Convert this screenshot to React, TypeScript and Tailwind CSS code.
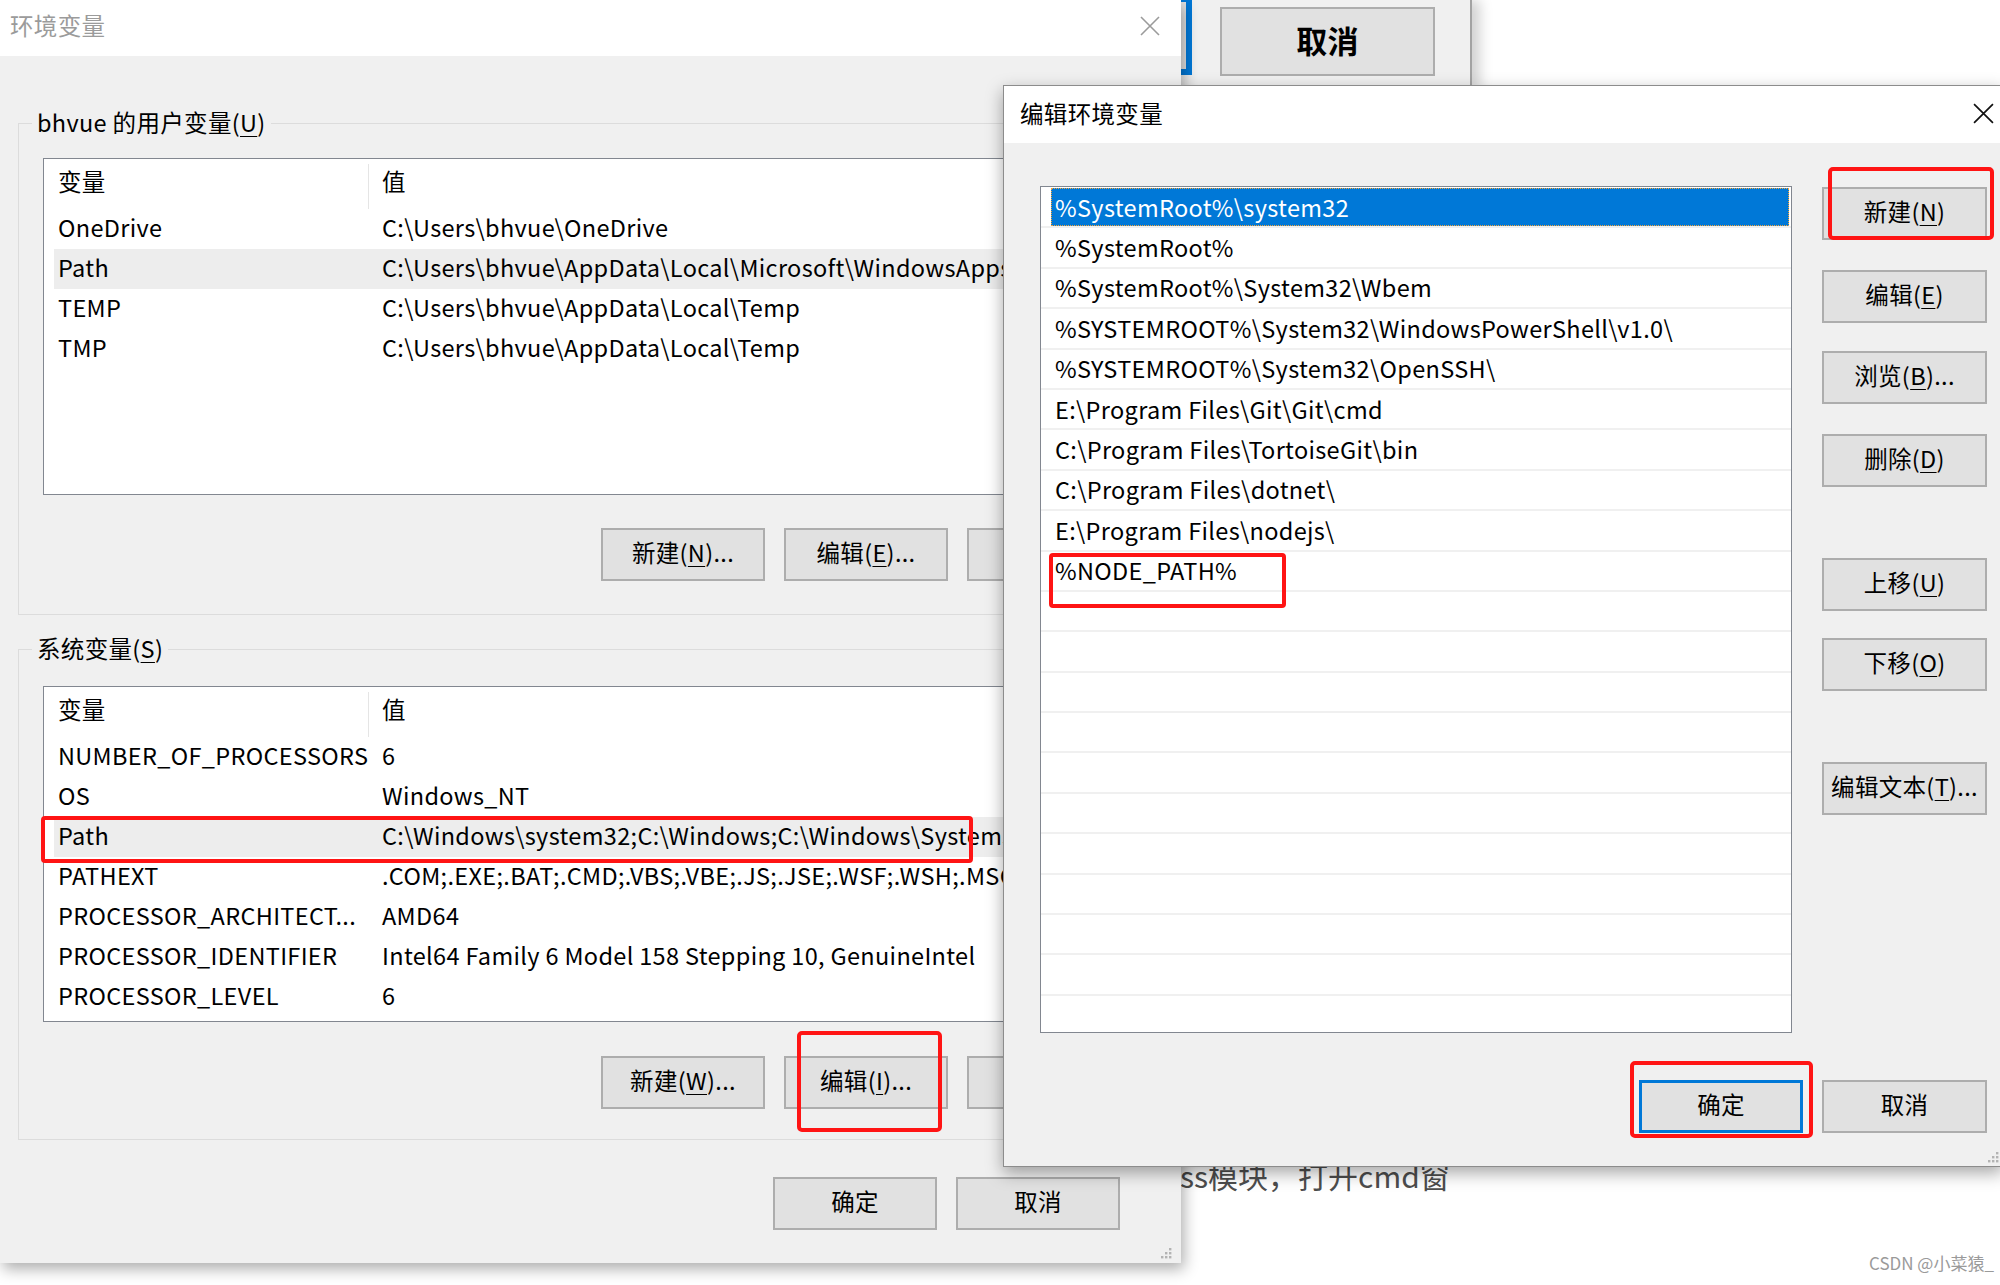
import React from "react";

type Pair = [string, string];

const userVars: Pair[] = [
  ["OneDrive", "C:\\Users\\bhvue\\OneDrive"],
  ["Path", "C:\\Users\\bhvue\\AppData\\Local\\Microsoft\\WindowsApps;"],
  ["TEMP", "C:\\Users\\bhvue\\AppData\\Local\\Temp"],
  ["TMP", "C:\\Users\\bhvue\\AppData\\Local\\Temp"],
];

const sysVars: Pair[] = [
  ["NUMBER_OF_PROCESSORS", "6"],
  ["OS", "Windows_NT"],
  ["Path", "C:\\Windows\\system32;C:\\Windows;C:\\Windows\\System32\\Wbem;"],
  ["PATHEXT", ".COM;.EXE;.BAT;.CMD;.VBS;.VBE;.JS;.JSE;.WSF;.WSH;.MSC"],
  ["PROCESSOR_ARCHITECT...", "AMD64"],
  ["PROCESSOR_IDENTIFIER", "Intel64 Family 6 Model 158 Stepping 10, GenuineIntel"],
  ["PROCESSOR_LEVEL", "6"],
];

const pathItems = [
  "%SystemRoot%\\system32",
  "%SystemRoot%",
  "%SystemRoot%\\System32\\Wbem",
  "%SYSTEMROOT%\\System32\\WindowsPowerShell\\v1.0\\",
  "%SYSTEMROOT%\\System32\\OpenSSH\\",
  "E:\\Program Files\\Git\\Git\\cmd",
  "C:\\Program Files\\TortoiseGit\\bin",
  "C:\\Program Files\\dotnet\\",
  "E:\\Program Files\\nodejs\\",
  "%NODE_PATH%",
];

function Btn({ children, w = "w-[164px]", focus = false }: { children: React.ReactNode; w?: string; focus?: boolean }) {
  return (
    <div
      className={`flex h-[53px] shrink-0 items-center justify-center bg-[#e1e1e1] pb-[3px] text-black ${w} ${
        focus ? "border-[3px] border-[#0078d7]" : "border-2 border-[#adadad]"
      }`}
    >
      {children}
    </div>
  );
}

function U({ children }: { children: React.ReactNode }) {
  return <span className="underline decoration-1 underline-offset-[4px]">{children}</span>;
}

function CloseX({ color, size }: { color: string; size: number }) {
  return (
    <svg width={size} height={size} viewBox="0 0 20 20" className="shrink-0">
      <path d="M1 1 L19 19 M19 1 L1 19" stroke={color} strokeWidth="1.6" fill="none" />
    </svg>
  );
}

function Grip() {
  return (
    <svg width="11" height="11" viewBox="0 0 11 11">
      <rect x="8" y="0" width="2.4" height="2.4" fill="#b3b3b3" />
      <rect x="8" y="4" width="2.4" height="2.4" fill="#b3b3b3" />
      <rect x="4" y="4" width="2.4" height="2.4" fill="#b3b3b3" />
      <rect x="8" y="8" width="2.4" height="2.4" fill="#b3b3b3" />
      <rect x="4" y="8" width="2.4" height="2.4" fill="#b3b3b3" />
      <rect x="0" y="8" width="2.4" height="2.4" fill="#b3b3b3" />
    </svg>
  );
}

function VarList({ rows, height, selected }: { rows: Pair[]; height: string; selected: number }) {
  return (
    <div className={`flex flex-col overflow-hidden border border-[#828790] bg-white ${height}`}>
      <div className="flex h-[50px] shrink-0 items-center">
        <div className="w-[324px] pb-[5px] pl-[14px]">变量</div>
        <div className="h-[45px] w-px self-end bg-[#e5e5e5]" />
        <div className="pb-[5px] pl-[13px]">值</div>
      </div>
      {rows.map((r, i) => (
        <div
          key={i}
          className={`ml-[10px] flex h-[40px] shrink-0 items-center whitespace-nowrap pb-[3px] ${i === selected ? "bg-[#ededed]" : ""}`}
        >
          <div className="w-[314px] shrink-0 pl-[4px]">{r[0]}</div>
          <div className="pl-[14px]">{r[1]}</div>
        </div>
      ))}
    </div>
  );
}

function GroupLabel({ children }: { children: React.ReactNode }) {
  return (
    <div className="-ml-[11px] -mt-[16px] h-[30px] w-fit bg-[#f0f0f0] px-[5px] pb-[2px] leading-[28px]">{children}</div>
  );
}

export default function App() {
  return (
    <div className="relative h-[1285px] w-[2000px] overflow-hidden bg-white font-['Noto_Sans_CJK_SC',sans-serif] text-[23.5px] tracking-[0.33px] text-black">
      {/* background page text */}
      <div className="absolute left-[1180px] top-[1160px] whitespace-nowrap text-[30px] leading-none tracking-normal text-[#4d4d4d]">
        ss模块，打开cmd窗
      </div>
      <div className="absolute left-[1869px] top-[1254px] whitespace-nowrap text-[17px] leading-none tracking-normal text-[#9a9a9a]">
        CSDN @小菜猿_
      </div>

      {/* window behind, top */}
      <div className="absolute left-[1041px] top-0 flex h-[90px] w-[431px] items-start gap-[28px] border-r-2 border-[#a3a3a3] bg-[#f0f0f0] shadow-[8px_0_12px_rgba(0,0,0,0.18)]">
        <div className="-mt-[4px] h-[79px] w-[151px] shrink-0 border-[6px] border-[#0078d7] bg-[#e1e1e1]" />
        <div className="mt-[7px] flex h-[69px] w-[215px] shrink-0 items-center justify-center border-2 border-[#adadad] bg-[#e1e1e1] pb-[3px] text-[31px] font-semibold">
          取消
        </div>
      </div>

      {/* left window: 环境变量 */}
      <div className="absolute left-0 top-0 flex h-[1263px] w-[1181px] flex-col bg-[#f0f0f0] shadow-[3px_6px_14px_rgba(0,0,0,0.32)]">
        <div className="flex h-[56px] shrink-0 items-center justify-between bg-white pb-[4px] pl-[10px] pr-[21px] text-[#9b9b9b]">
          <span>环境变量</span>
          <CloseX color="#9b9b9b" size={20} />
        </div>
        <div className="flex flex-col px-[18px]">
          <div className="mt-[67px] flex flex-col border border-[#dcdcdc] px-[24px] pb-[33px]">
            <GroupLabel>
              bhvue 的用户变量(<U>U</U>)
            </GroupLabel>
            <div className="mt-[20px]">
              <VarList rows={userVars} height="h-[337px]" selected={1} />
            </div>
            <div className="mt-[33px] flex justify-end gap-[19px] pr-[7px]">
              <Btn>
                新建(<U>N</U>)...
              </Btn>
              <Btn>
                编辑(<U>E</U>)...
              </Btn>
              <Btn>
                删除(<U>D</U>)
              </Btn>
            </div>
          </div>

          <div className="mt-[34px] flex flex-col border border-[#dcdcdc] px-[24px] pb-[30px]">
            <GroupLabel>
              系统变量(<U>S</U>)
            </GroupLabel>
            <div className="mt-[22px]">
              <VarList rows={sysVars} height="h-[336px]" selected={2} />
            </div>
            <div className="mt-[34px] flex justify-end gap-[19px] pr-[7px]">
              <Btn>
                新建(<U>W</U>)...
              </Btn>
              <Btn>
                编辑(<U>I</U>)...
              </Btn>
              <Btn>
                删除(<U>L</U>)
              </Btn>
            </div>
          </div>
        </div>
        <div className="mt-[37px] flex justify-end gap-[19px] pr-[61px]">
          <Btn>确定</Btn>
          <Btn>取消</Btn>
        </div>
        <div className="absolute bottom-[4px] right-[9px]">
          <Grip />
        </div>
      </div>

      {/* right dialog: 编辑环境变量 */}
      <div className="absolute left-[1003px] top-[85px] flex h-[1082px] w-[1000px] flex-col border border-[#8c8c8c] bg-[#f0f0f0] shadow-[0_6px_16px_rgba(0,0,0,0.35)]">
        <div className="flex h-[57px] shrink-0 items-center justify-between bg-white pb-[2px] pl-[16px] pr-[8px]">
          <span>编辑环境变量</span>
          <CloseX color="#111" size={21} />
        </div>
        <div className="flex flex-col pl-[36px]">
          <div className="mt-[43px] flex items-start">
            <div className="flex h-[847px] w-[752px] shrink-0 flex-col overflow-hidden border border-[#828790] bg-white pt-px">
              {Array.from({ length: 21 }).map((_, i) => (
                <div key={i} className="h-[40.4px] shrink-0 border-b-2 border-[#f0f0f0]">
                  {i === 0 ? (
                    <div className="ml-[10px] mr-[2px] flex h-full items-center whitespace-nowrap border border-dotted border-[#f3a43a] bg-[#0078d7] pl-[3px] text-white">
                      {pathItems[0]}
                    </div>
                  ) : (
                    <div className="ml-[10px] flex h-full items-center whitespace-nowrap pl-[4px]">
                      {pathItems[i] ?? ""}
                    </div>
                  )}
                </div>
              ))}
            </div>
            <div className="ml-[30px] flex flex-col">
              <div className="mt-px">
                <Btn w="w-[165px]">
                  新建(<U>N</U>)
                </Btn>
              </div>
              <div className="mt-[30px]">
                <Btn w="w-[165px]">
                  编辑(<U>E</U>)
                </Btn>
              </div>
              <div className="mt-[28px]">
                <Btn w="w-[165px]">
                  浏览(<U>B</U>)...
                </Btn>
              </div>
              <div className="mt-[30px]">
                <Btn w="w-[165px]">
                  删除(<U>D</U>)
                </Btn>
              </div>
              <div className="mt-[71px]">
                <Btn w="w-[165px]">
                  上移(<U>U</U>)
                </Btn>
              </div>
              <div className="mt-[27px]">
                <Btn w="w-[165px]">
                  下移(<U>O</U>)
                </Btn>
              </div>
              <div className="mt-[71px]">
                <Btn w="w-[165px]">
                  编辑文本(<U>T</U>)...
                </Btn>
              </div>
            </div>
          </div>
          <div className="mt-[47px] flex gap-[19px] pl-[599px]">
            <Btn w="w-[164px]" focus>
              确定
            </Btn>
            <Btn w="w-[165px]">取消</Btn>
          </div>
        </div>
        <div className="absolute bottom-[3px] right-[3px]">
          <Grip />
        </div>
      </div>

      {/* red annotation boxes */}
      <div className="absolute left-[41px] top-[816px] h-[47px] w-[932px] rounded-[4px] border-[4px] border-[#ff1414]" />
      <div className="absolute left-[797px] top-[1031px] h-[101px] w-[145px] rounded-[5px] border-[4px] border-[#ff1414]" />
      <div className="absolute left-[1828px] top-[167px] h-[73px] w-[166px] rounded-[5px] border-[4px] border-[#ff1414]" />
      <div className="absolute left-[1049px] top-[553px] h-[55px] w-[237px] rounded-[4px] border-[4px] border-[#ff1414]" />
      <div className="absolute left-[1630px] top-[1061px] h-[77px] w-[183px] rounded-[5px] border-[4px] border-[#ff1414]" />
    </div>
  );
}
